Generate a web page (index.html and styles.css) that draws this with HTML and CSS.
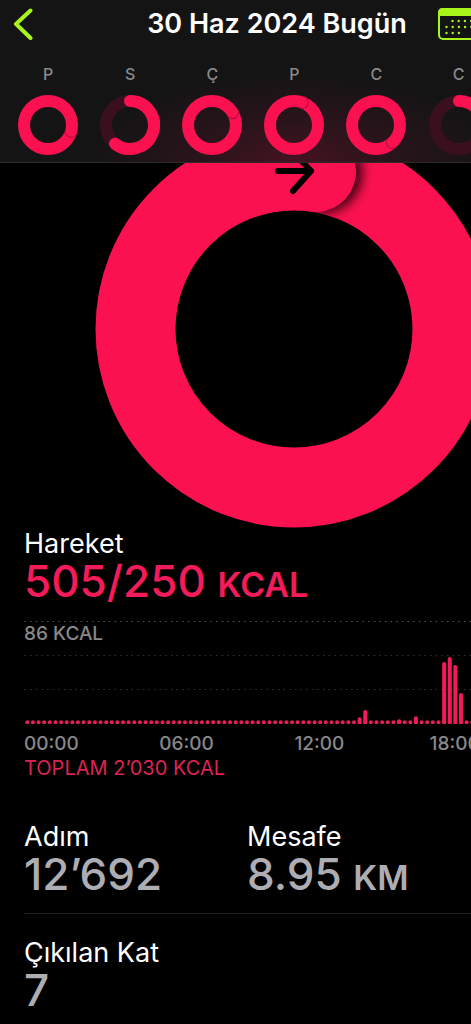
FILE: index.html
```html
<!DOCTYPE html>
<html lang="tr">
<head>
<meta charset="utf-8">
<meta name="viewport" content="width=device-width, initial-scale=1">
<title>Aktivite</title>
<link rel="stylesheet" href="styles.css">
</head>
<body>
<div class="app">
  <header class="header">
    <nav class="nav">
      <button class="icon-button back" type="button" aria-label="Geri">
        <svg width="20" height="32" viewBox="0 0 20 32"><path d="M17.500 2.500 3 16 17.500 30" fill="none" stroke="#a8f51c" stroke-width="4" stroke-linecap="round" stroke-linejoin="round"/></svg>
      </button>
      <h1 class="title">30 Haz 2024 Bugün</h1>
      <button class="icon-button" type="button" aria-label="Takvim">
        <svg width="42" height="32" viewBox="0 0 42 32">
          <rect x="1" y="1" width="40" height="30" rx="4" fill="none" stroke="#a8f51c" stroke-width="2"/>
          <path d="M0 8V5Q0 0 5 0H37Q42 0 42 5V8Z" fill="#a8f51c"/>
          <path d="M14.500 13H40M8.500 19H40M8.500 25H22" fill="none" stroke="#a8f51c" stroke-width="2.400" stroke-dasharray="0 6.200" stroke-linecap="round"/>
        </svg>
      </button>
    </nav>
    <ol class="week">
      <li class="day"><span>P</span>
        <svg class="day-ring" viewBox="0 0 60 60"><circle class="full" cx="30" cy="30" r="24"/><path class="tip" transform="rotate(105 30 30)" d="M30 0A6 6 0 0 1 30 12"/></svg></li>
      <li class="day"><span>S</span>
        <svg class="day-ring" viewBox="0 0 60 60"><circle class="track" cx="30" cy="30" r="24"/><path class="full" d="M30 6A24 24 0 1 1 15 48.700"/></svg></li>
      <li class="day"><span>Ç</span>
        <svg class="day-ring" viewBox="0 0 60 60"><circle class="full" cx="30" cy="30" r="24"/><path class="tip" transform="rotate(59 30 30)" d="M30 0A6 6 0 0 1 30 12"/></svg></li>
      <li class="day"><span>P</span>
        <svg class="day-ring" viewBox="0 0 60 60"><circle class="full" cx="30" cy="30" r="24"/><path class="tip" transform="rotate(20 30 30)" d="M30 0A6 6 0 0 1 30 12"/></svg></li>
      <li class="day"><span>C</span>
        <svg class="day-ring" viewBox="0 0 60 60"><circle class="full" cx="30" cy="30" r="24"/><path class="tip" transform="rotate(137 30 30)" d="M30 0A6 6 0 0 1 30 12"/></svg></li>
      <li class="day"><span>C</span>
        <svg class="day-ring" viewBox="0 0 60 60"><circle class="track" cx="30" cy="30" r="24"/><path class="full" d="M30 6A24 24 0 0 1 54 30"/></svg></li>
      <li class="day"><span>P</span>
        <svg class="day-ring" viewBox="0 0 60 60"><circle class="full" cx="30" cy="30" r="24"/><path class="tip" transform="rotate(8 30 30)" d="M30 0A6 6 0 0 1 30 12"/></svg></li>
    </ol>
  </header>

  <main>
    <svg class="move-ring" viewBox="0 33 400 365" role="img" aria-label="Hareket halkası">
      <defs>
        <filter id="soft" x="-50%" y="-50%" width="200%" height="200%"><feGaussianBlur stdDeviation="6"/></filter>
        <clipPath id="band"><path clip-rule="evenodd" d="M200 0.500a198.500 198.500 0 1 1 0 397a198.500 198.500 0 1 1 0-397ZM200 80.500a118.500 118.500 0 1 0 0 237a118.500 118.500 0 1 0 0-237Z"/></clipPath>
      </defs>
      <circle cx="200" cy="199" r="158.500" fill="none" stroke="#fc1150" stroke-width="80"/>
      <g clip-path="url(#band)">
        <circle cx="228" cy="43" r="40" fill="#30000f" filter="url(#soft)"/>
        <path d="M150 48A158.500 158.500 0 0 1 222 42" fill="none" stroke="#fc1150" stroke-width="80" stroke-linecap="round"/>
      </g>
      <path d="M184 41H217M199 22L217 41L199 61" fill="none" stroke="#000" stroke-width="6" stroke-linecap="round" stroke-linejoin="round"/>
    </svg>

    <section class="move">
      <h2 class="label">Hareket</h2>
      <p class="value accent">505/250 <span class="unit">KCAL</span></p>
      <div class="chart">
        <svg class="plot" viewBox="0 0 540 104" role="img" aria-label="Saatlik hareket">
          <path d="M0.500 1.500H540" stroke="#555" stroke-dasharray="1.500 4.125"/>
          <path d="M0.500 35.500H540M0.500 69.500H540" stroke="#333" stroke-dasharray="1.500 4.125"/>
          <path d="M3.300 102H540" stroke="#e81e58" stroke-width="4" stroke-linecap="round" stroke-dasharray="0 5.625"/>
          <path d="M335.200 102V99M340.800 102V92M374.600 102V101M391.400 102V98M419.600 102V44M425.200 102V39M430.800 102V47M436.400 102V75" stroke="#f01b57" stroke-width="4" stroke-linecap="round"/>
        </svg>
        <span class="peak">86 KCAL</span>
      </div>
      <div class="axis"><span>00:00</span><span>06:00</span><span>12:00</span><span>18:00</span></div>
      <p class="total">TOPLAM 2’030 KCAL</p>
    </section>

    <section class="stats">
      <div>
        <h2 class="label">Adım</h2>
        <p class="value">12’692</p>
      </div>
      <div>
        <h2 class="label">Mesafe</h2>
        <p class="value">8.95 <span class="unit">KM</span></p>
      </div>
    </section>
    <section class="stats last">
      <div>
        <h2 class="label">Çıkılan Kat</h2>
        <p class="value">7</p>
      </div>
    </section>
  </main>
</div>
</body>
</html>
```
FILE: styles.css
```css
* {
  box-sizing: border-box;
}

body {
  margin: 0;
  overflow-x: hidden;
  background: #000;
  color: #fff;
  font-family: Inter, "Liberation Sans", sans-serif;
}

h1, h2, p, ol {
  margin: 0;
  padding: 0;
}

svg {
  display: block;
}

.app {
  width: 125%;
}

.header {
  padding-bottom: 7px;
  border-bottom: 1px solid #2c2a2b;
  background: radial-gradient(ellipse 210px 90px at 50% 100%, #451321, #2a141b 45%, #141414 100%) #141414;
}

.nav {
  display: grid;
  grid-template-columns: 116px 322px 1fr;
  align-items: center;
  height: 48px;
}

.icon-button {
  justify-self: start;
  padding: 0;
  border: 0;
  background: none;
}

.back {
  padding-left: 13px;
}

.title {
  font-size: 27px;
  font-weight: 600;
  line-height: 48px;
  text-align: center;
  white-space: nowrap;
}

.week {
  display: grid;
  grid-template-columns: repeat(7, 1fr);
  padding: 16px 7px 0;
  list-style: none;
}

.day {
  display: flex;
  flex-direction: column;
  align-items: center;
  gap: 11px;
  color: #8a8a8b;
  font-size: 16px;
  font-weight: 500;
  line-height: 20px;
}

.day-ring {
  width: 60px;
  height: 60px;
}

.full,
.track {
  fill: none;
  stroke: #fc1150;
  stroke-width: 12;
  stroke-linecap: round;
}

.track {
  stroke: #3b101e;
}

.tip {
  fill: none;
  stroke: #b50c3c;
  stroke-width: 1;
}

.move-ring {
  width: 400px;
  margin: 0 auto;
}

.move {
  padding: 0 24px;
}

.label {
  font-size: 27px;
  font-weight: 400;
  line-height: 32px;
}

.value {
  color: #adadb3;
  font-size: 44px;
  font-weight: 500;
  line-height: 42px;
  white-space: nowrap;
}

.accent {
  color: #f31b59;
}

.unit {
  font-size: 34px;
  font-weight: 600;
  line-height: 34px;
}

.chart {
  display: grid;
  margin-top: 18px;
}

.plot,
.peak {
  grid-area: 1 / 1;
}

.plot {
  width: 100%;
}

.peak,
.axis {
  color: #88888a;
  font-size: 19px;
  font-weight: 500;
  line-height: 24px;
}

.peak {
  padding-top: 2px;
}

.axis {
  display: grid;
  grid-template-columns: repeat(4, 1fr);
  margin-top: 8px;
}

.total {
  color: #dc2353;
  font-size: 20px;
  font-weight: 400;
  line-height: 24px;
}

.stats {
  display: grid;
  grid-template-columns: 223px 1fr;
  margin: 41px 0 0 24px;
  padding-bottom: 18px;
  border-bottom: 1px solid #242425;
}

.last {
  margin-top: 23px;
  padding-bottom: 0;
  border: 0;
}
```
